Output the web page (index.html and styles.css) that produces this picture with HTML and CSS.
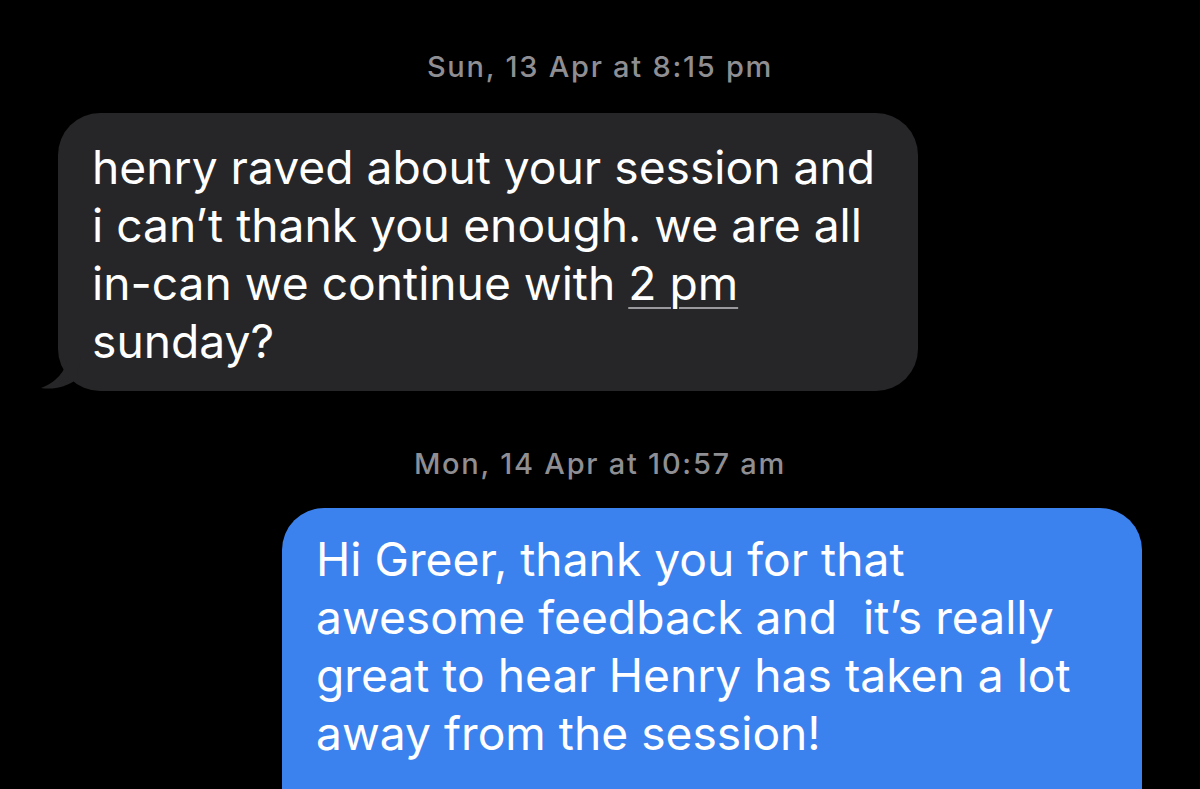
FILE: index.html
```html
<!DOCTYPE html>
<html lang="en">
<head>
<meta charset="utf-8">
<title>Messages</title>
<link rel="stylesheet" href="styles.css">
</head>
<body>
<main class="thread">
  <div class="stamp"><span class="stamp-date">Sun, 13 Apr</span> at 8:15 pm</div>
  <div class="row row-in">
    <div class="bubble bubble-in">
      henry raved about your session and<br>
      i can’t thank you enough. we are all<br>
      in-can we continue with <span class="link">2 pm</span><br>
      sunday?
      <svg class="tail" width="40" height="34" viewBox="0 0 40 34" aria-hidden="true">
        <path d="M26 0 C26 14 14 26 0 31 C12 33 26 30 36 22 L40 0 Z" fill="#262628"/>
      </svg>
    </div>
  </div>
  <div class="stamp stamp-2"><span class="stamp-date">Mon, 14 Apr</span> at 10:57 am</div>
  <div class="row row-out">
    <div class="bubble bubble-out">
      Hi Greer, thank you for that<br>
      awesome feedback and&nbsp; it’s really<br>
      great to hear Henry has taken a lot<br>
      away from the session!<br>
      &nbsp;
    </div>
  </div>
</main>
</body>
</html>
```

FILE: styles.css
```css
html, body {
  margin: 0;
  padding: 0;
  background: #000;
  height: 100%;
  overflow: hidden;
}

.thread {
  display: flex;
  flex-direction: column;
  font-family: Inter, "Liberation Sans", sans-serif;
  color: #fff;
}

.stamp {
  text-align: center;
  color: #8e8e93;
  font-size: 29px;
  letter-spacing: 1.75px;
  font-weight: 500;
  line-height: 34px;
  margin-top: 50px;
  margin-bottom: 29px;
}

.stamp-2 {
  margin-top: 56px;
  margin-bottom: 27px;
}

.stamp-date {
  font-weight: 500;
}

.row {
  display: flex;
}

.row-in {
  padding-left: 58px;
}

.row-out {
  padding-left: 282px;
}

.bubble {
  position: relative;
  font-size: 46.2px;
  line-height: 58px;
  border-radius: 42px;
  box-sizing: border-box;
}

.bubble-in {
  background: #262628;
  width: 860px;
  padding: 25px 20px 21px 34px;
}

.bubble-out {
  background: #3b82ef;
  width: 860px;
  padding: 22px 20px 40px 34px;
}

.link {
  text-decoration: underline;
  text-decoration-color: #9a9a9e;
  text-decoration-thickness: 2px;
  text-underline-offset: 7px;
}

.tail {
  position: absolute;
  left: -17px;
  bottom: 0;
}
```
